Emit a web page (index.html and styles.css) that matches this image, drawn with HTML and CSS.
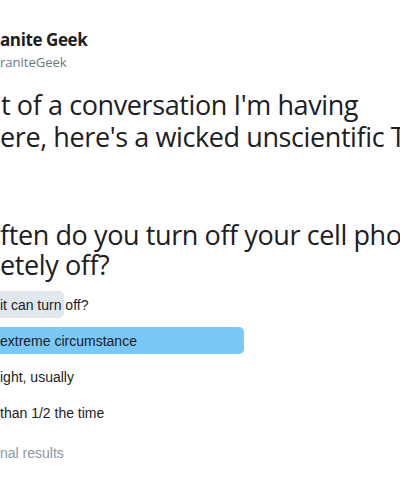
FILE: index.html
```html
<!DOCTYPE html>
<html>
<head>
<meta charset="utf-8">
<link rel="stylesheet" href="styles.css">
</head>
<body>
<div class="tweet">
  <div class="author">
    <div class="name">anite Geek</div>
    <div class="handle">raniteGeek</div>
  </div>
  <div class="text">
    <div class="line l1">t of a conversation I'm having</div>
    <div class="line l2">ere, here's a wicked unscientific T</div>
  </div>
  <div class="question">
    <div class="line l3">ften do you turn off your cell pho</div>
    <div class="line l4">etely off?</div>
  </div>
  <div class="poll">
    <div class="option"><div class="bar grey" style="width:64px"></div><span class="label">it can turn off?</span></div>
    <div class="option"><div class="bar blue" style="width:244px"></div><span class="label">extreme circumstance</span></div>
    <div class="option"><div class="bar" style="width:0"></div><span class="label">ight, usually</span></div>
    <div class="option"><div class="bar" style="width:0"></div><span class="label">than 1/2 the time</span></div>
  </div>
  <div class="results">nal results</div>
</div>
</body>
</html>
```
FILE: styles.css
```css
html, body {
  margin: 0;
  padding: 0;
  background: #ffffff;
  overflow: hidden;
}
.tweet {
  width: 400px;
  height: 485px;
  padding-top: 29px;
  box-sizing: border-box;
  color: #1c2022;
  font-family: "Open Sans", "Noto Sans", sans-serif;
  overflow: hidden;
}
.author {
  display: flex;
  flex-direction: column;
}
.name {
  font-weight: 700;
  font-size: 17px;
  line-height: 22px;
  letter-spacing: -0.4px;
  color: #1c2022;
}
.handle {
  font-size: 13px;
  line-height: 20px;
  color: #697882;
  margin-top: 1px;
}
.text {
  margin-top: 17px;
}
.line {
  font-size: 27px;
  line-height: 32px;
  white-space: nowrap;
  letter-spacing: -0.4px;
}
.l1 { margin-left: 1px; }
.question {
  margin-top: 67px;
}
.question .line {
  line-height: 30px;
}
.poll {
  margin-top: 11px;
  display: flex;
  flex-direction: column;
  gap: 9px;
}
.option {
  position: relative;
  height: 27px;
  display: flex;
  align-items: center;
}
.bar {
  position: absolute;
  left: 0;
  top: 0;
  bottom: 0;
  border-radius: 0 5px 5px 0;
}
.bar.grey { background: #e1e8ed; }
.bar.blue { background: #79c8f6; }
.label {
  position: relative;
  font-family: "Liberation Sans", Arial, sans-serif;
  font-size: 14px;
  color: #1c2022;
}
.results {
  margin-top: 18px;
  font-family: "Liberation Sans", Arial, sans-serif;
  font-size: 14px;
  line-height: 18px;
  color: #8b98a5;
}
```
